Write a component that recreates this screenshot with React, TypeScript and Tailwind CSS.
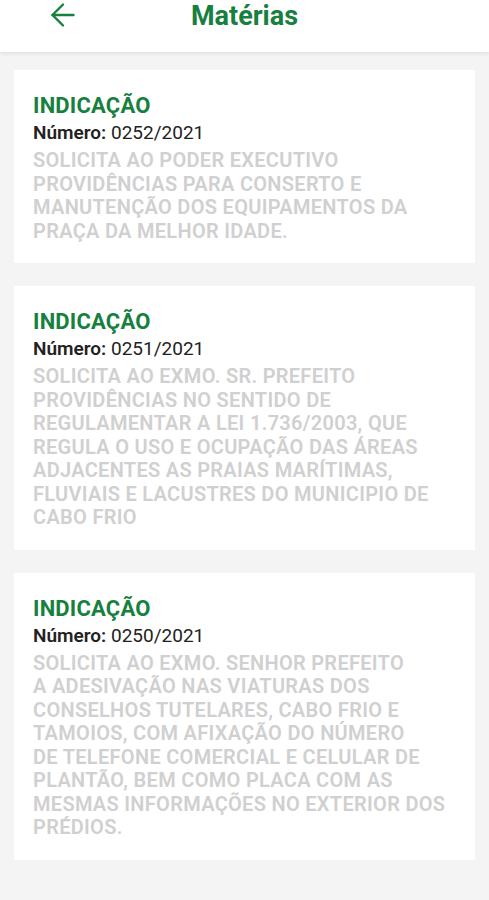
import { ArrowLeft } from "lucide-react";

interface Materia {
  tipo: string;
  numero: string;
  ementa: string[];
}

const materias: Materia[] = [
  {
    tipo: "INDICAÇÃO",
    numero: "0252/2021",
    ementa: [
      "SOLICITA AO PODER EXECUTIVO",
      "PROVIDÊNCIAS PARA CONSERTO E",
      "MANUTENÇÃO DOS EQUIPAMENTOS DA",
      "PRAÇA DA MELHOR IDADE.",
    ],
  },
  {
    tipo: "INDICAÇÃO",
    numero: "0251/2021",
    ementa: [
      "SOLICITA AO EXMO. SR. PREFEITO",
      "PROVIDÊNCIAS NO SENTIDO DE",
      "REGULAMENTAR A LEI 1.736/2003, QUE",
      "REGULA O USO E OCUPAÇÃO DAS ÁREAS",
      "ADJACENTES AS PRAIAS MARÍTIMAS,",
      "FLUVIAIS E LACUSTRES DO MUNICIPIO DE",
      "CABO FRIO",
    ],
  },
  {
    tipo: "INDICAÇÃO",
    numero: "0250/2021",
    ementa: [
      "SOLICITA AO EXMO. SENHOR PREFEITO",
      "A ADESIVAÇÃO NAS VIATURAS DOS",
      "CONSELHOS TUTELARES, CABO FRIO E",
      "TAMOIOS, COM AFIXAÇÃO DO NÚMERO",
      "DE TELEFONE COMERCIAL E CELULAR DE",
      "PLANTÃO, BEM COMO PLACA COM AS",
      "MESMAS INFORMAÇÕES NO EXTERIOR DOS",
      "PRÉDIOS.",
    ],
  },
];

function MateriaCard({ materia }: { materia: Materia }) {
  return (
    <div className="bg-white px-[19px] pt-[23px] pb-[20px]">
      <h2 className="text-[22px] leading-[26px] font-bold tracking-[0.2px] text-[#17803f]">
        {materia.tipo}
      </h2>
      <p className="mt-[1px] text-[19px] leading-[26px] text-[#222]">
        <span className="font-semibold">Número:</span> {materia.numero}
      </p>
      <div className="mt-[3px] text-[20px] leading-[23.5px] font-semibold tracking-[0.3px] text-[#d0d0d0]">
        {materia.ementa.map((linha, i) => (
          <div key={i}>{linha}</div>
        ))}
      </div>
    </div>
  );
}

export default function App() {
  return (
    <div className="min-h-[900px] bg-[#f4f4f4] font-['Roboto',sans-serif]">
      <header className="h-[52px] bg-white shadow-[0_2px_4px_rgba(0,0,0,0.08)]">
        <div className="flex h-[33px] items-center px-[45px]">
          <button className="-mt-[4px] text-[#17803f]">
            <ArrowLeft size={36} strokeWidth={1.6} />
          </button>
          <h1 className="flex-1 pr-[36px] text-center text-[27px] leading-[33px] font-bold text-[#17803f]">
            Matérias
          </h1>
        </div>
      </header>
      <main className="flex flex-col gap-[23px] px-[14px] pt-[18px]">
        {materias.map((m) => (
          <MateriaCard key={m.numero} materia={m} />
        ))}
      </main>
    </div>
  );
}
